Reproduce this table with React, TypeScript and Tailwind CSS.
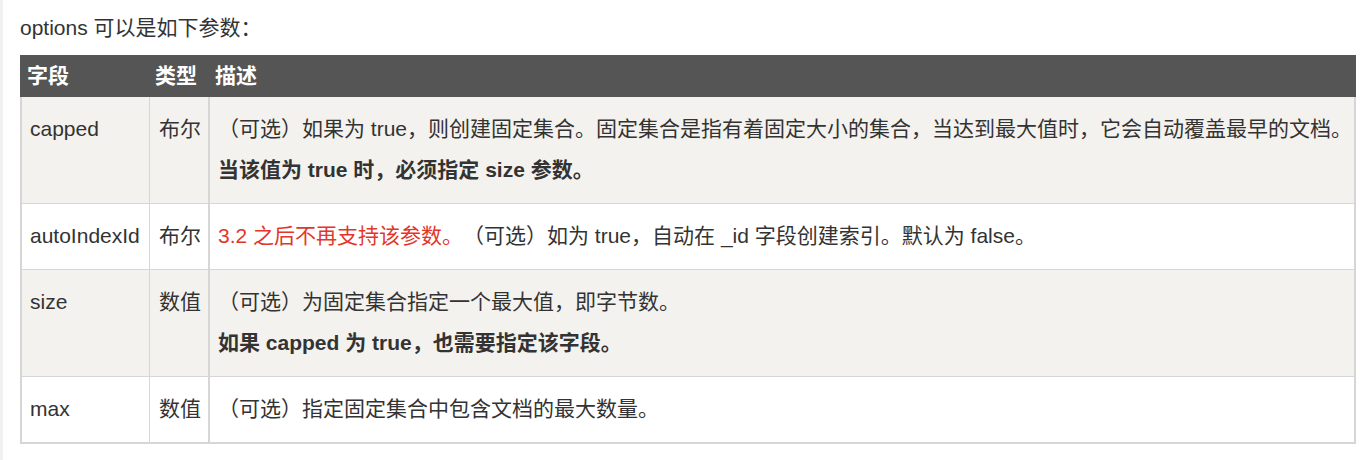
const font = { fontFamily: '"Liberation Sans", "Noto Sans CJK SC", sans-serif' }

type Row = {
  name: string
  type: string
  lines: React.ReactNode[]
  shaded: boolean
}

const rows: Row[] = [
  {
    name: 'capped',
    type: '布尔',
    shaded: true,
    lines: [
      <>（可选）如果为 true，则创建固定集合。固定集合是指有着固定大小的集合，当达到最大值时，它会自动覆盖最早的文档。</>,
      <strong className="font-bold">当该值为 true 时，必须指定 size 参数。</strong>,
    ],
  },
  {
    name: 'autoIndexId',
    type: '布尔',
    shaded: false,
    lines: [
      <>
        <span className="text-[#e2362b]">3.2 之后不再支持该参数。</span>（可选）如为 true，自动在 _id 字段创建索引。默认为 false。
      </>,
    ],
  },
  {
    name: 'size',
    type: '数值',
    shaded: true,
    lines: [
      <>（可选）为固定集合指定一个最大值，即字节数。</>,
      <strong className="font-bold">如果 capped 为 true，也需要指定该字段。</strong>,
    ],
  },
  {
    name: 'max',
    type: '数值',
    shaded: false,
    lines: [<>（可选）指定固定集合中包含文档的最大数量。</>],
  },
]

export default function App() {
  return (
    <div
      className="h-[460px] w-full border-l-[3px] border-[#f1f1f1] bg-white pl-[17px] text-[21px] leading-[30px] text-[#333] [text-spacing-trim:space-all]"
      style={font}
    >
      <p className="pt-[13px] pb-[12px]">options 可以是如下参数：</p>

      <div className="w-[1336px]">
        <div className="flex h-[42px] items-center bg-[#555] font-bold text-white">
          <div className="w-[129px] pl-[7px]">字段</div>
          <div className="w-[59px] pl-[6px]">类型</div>
          <div className="flex-1 pl-[7px]">描述</div>
        </div>

        <div className="border-2 border-t-0 border-[#d6d6d6]">
          {rows.map((row, i) => (
            <div
              key={row.name}
              className={`flex ${row.shaded ? 'bg-[#f3f2ee]' : 'bg-white'} ${
                i < rows.length - 1 ? 'border-b border-[#d6d6d6]' : ''
              }`}
            >
              <div className="w-[127px] pt-[17px] pl-[8px]">{row.name}</div>
              <div className="w-[59px] border-l border-[#d6d6d6] pt-[17px] pl-[9px]">{row.type}</div>
              <div className="flex flex-1 flex-col gap-[11px] border-l-2 border-[#d6d6d6] pt-[17px] pb-[18px] pl-[8px]">
                {row.lines.map((line, j) => (
                  <p key={j}>{line}</p>
                ))}
              </div>
            </div>
          ))}
        </div>
      </div>
    </div>
  )
}
